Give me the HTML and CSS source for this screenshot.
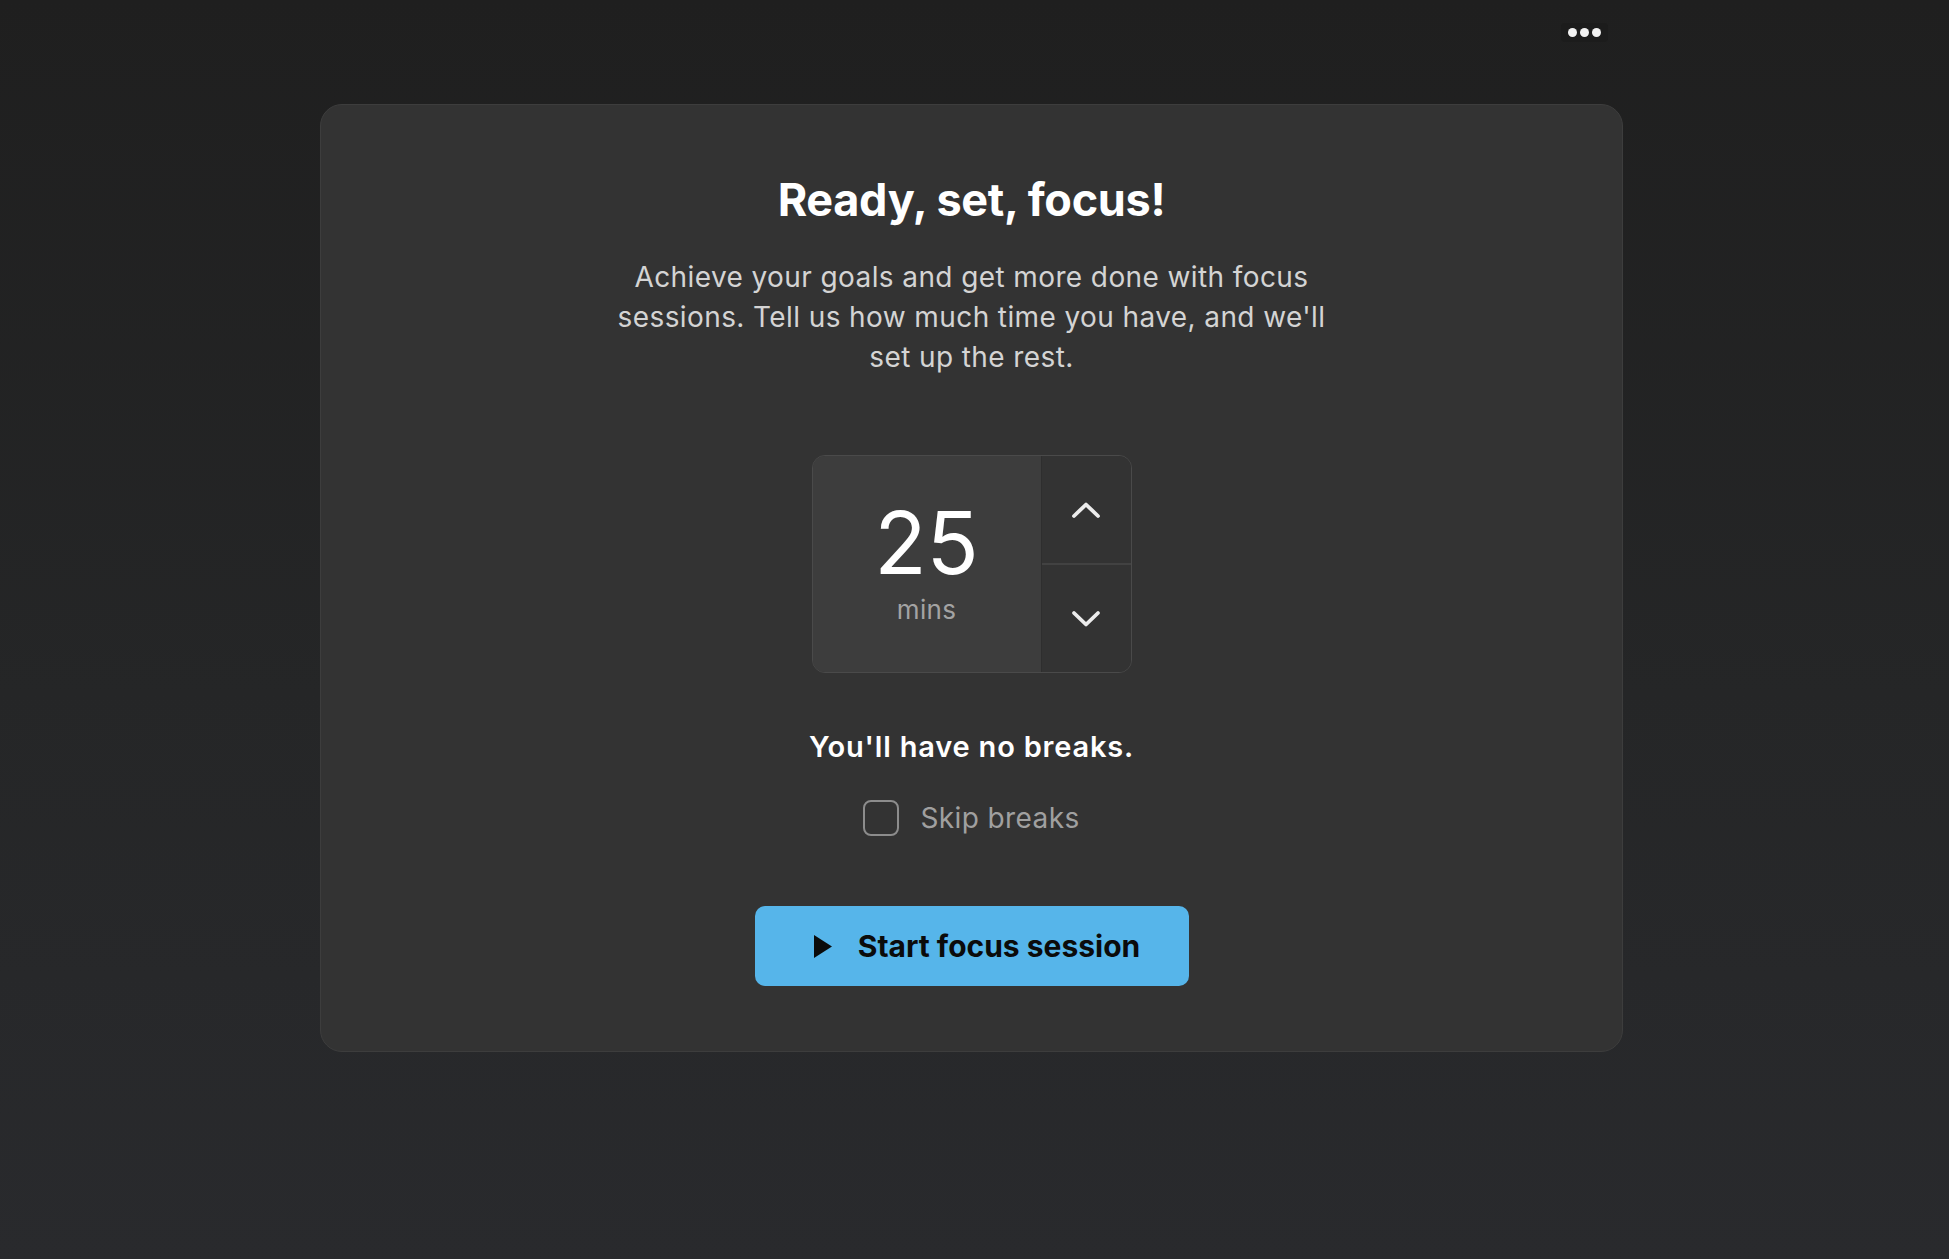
FILE: index.html
```html
<!DOCTYPE html>
<html lang="en">
<head>
<meta charset="utf-8">
<title>Focus</title>
<link rel="stylesheet" href="styles.css">
</head>
<body>
<div class="page">
  <header class="topbar">
    <button class="more" aria-label="More options">
      <span class="dot"></span><span class="dot"></span><span class="dot"></span>
    </button>
  </header>
  <main class="card">
    <h1 class="title">Ready, set, focus!</h1>
    <p class="lead">Achieve your goals and get more done with focus sessions. Tell us how much time you have, and we'll set up the rest.</p>
    <div class="stepper">
      <div class="value">
        <span class="num">25</span>
        <span class="unit">mins</span>
      </div>
      <div class="arrows">
        <button class="arrow" aria-label="Increase">
          <svg width="30" height="18" viewBox="0 0 30 18"><path d="M3 15 L15 3.5 L27 15" fill="none" stroke="#ececec" stroke-width="3.8" stroke-linecap="round" stroke-linejoin="round"/></svg>
        </button>
        <button class="arrow arrow-down" aria-label="Decrease">
          <svg width="30" height="18" viewBox="0 0 30 18"><path d="M3 3 L15 14.5 L27 3" fill="none" stroke="#ececec" stroke-width="3.8" stroke-linecap="round" stroke-linejoin="round"/></svg>
        </button>
      </div>
    </div>
    <p class="breaks">You'll have no breaks.</p>
    <label class="skip">
      <span class="box"></span>
      <span class="skip-text">Skip breaks</span>
    </label>
    <button class="start">
      <svg width="20" height="25" viewBox="0 0 20 25"><path d="M1 1 L19 12.5 L1 24 Z" fill="#0b0b0b"/></svg>
      <span>Start focus session</span>
    </button>
  </main>
</div>
</body>
</html>
```

FILE: styles.css
```css
html, body {
  margin: 0;
  padding: 0;
  height: 100%;
}
body {
  background: linear-gradient(to bottom, #1f1f1f 0%, #252627 55%, #292a2d 100%);
  font-family: Inter, "Noto Sans", "Liberation Sans", sans-serif;
  color: #ffffff;
}
.page {
  width: 1303px;
  margin: 0 auto;
  padding-right: 6px;
}
.topbar {
  height: 64px;
  display: flex;
  justify-content: flex-end;
  align-items: center;
  padding-right: 15px;
}
.more {
  display: flex;
  gap: 3px;
  align-items: center;
  background: #1c1c1c;
  border: none;
  padding: 5px 7px;
  border-radius: 4px;
  cursor: pointer;
}
.dot {
  width: 9px;
  height: 9px;
  border-radius: 50%;
  background: #f2f2f2;
}
.card {
  margin-top: 40px;
  height: 948px;
  box-sizing: border-box;
  background: #333333;
  border: 1px solid #3d3d3d;
  border-radius: 22px;
  display: flex;
  flex-direction: column;
  align-items: center;
  padding-top: 69px;
}
.title {
  margin: 0;
  font-size: 45px;
  line-height: 52px;
  font-weight: 700;
  color: #ffffff;
  letter-spacing: -0.3px;
}
.lead {
  margin: 31px 0 0;
  width: 720px;
  text-align: center;
  font-size: 28px;
  line-height: 40px;
  color: #d4d4d4;
  letter-spacing: 0.4px;
}
.stepper {
  margin-top: 78px;
  width: 320px;
  height: 218px;
  box-sizing: border-box;
  border: 1px solid #4a4a4a;
  border-radius: 13px;
  overflow: hidden;
  display: flex;
}
.value {
  width: 228px;
  background: #3d3d3d;
  display: flex;
  flex-direction: column;
  align-items: center;
  padding-top: 42px;
  box-sizing: border-box;
}
.num {
  font-size: 86px;
  line-height: 90px;
  font-weight: 400;
  color: #ffffff;
}
.unit {
  margin-top: 7px;
  font-size: 26px;
  line-height: 30px;
  color: #a3a3a3;
  letter-spacing: 0.3px;
}
.arrows {
  flex: 1;
  display: flex;
  flex-direction: column;
  border-left: 1px solid #2e2e2e;
  background: #333333;
}
.arrow {
  flex: 1;
  border: none;
  background: transparent;
  display: flex;
  align-items: center;
  justify-content: center;
  padding: 0;
  cursor: pointer;
}
.arrow-down {
  border-top: 2px solid #424242;
}
.breaks {
  margin: 56px 0 0;
  font-size: 29px;
  line-height: 36px;
  font-weight: 600;
  color: #ffffff;
  letter-spacing: 0.8px;
}
.skip {
  margin-top: 35px;
  display: flex;
  align-items: center;
  gap: 21px;
  height: 36px;
}
.box {
  width: 32px;
  height: 32px;
  border: 2px solid #8c8c8c;
  border-radius: 8px;
}
.skip-text {
  font-size: 28px;
  color: #a0a0a0;
  letter-spacing: 0.4px;
}
.start {
  margin-top: 70px;
  width: 434px;
  height: 80px;
  border: none;
  border-radius: 10px;
  background: #56b5ea;
  display: flex;
  align-items: center;
  justify-content: center;
  gap: 25px;
  font-family: inherit;
  font-size: 30px;
  font-weight: 700;
  color: #0b0b0b;
  cursor: pointer;
  padding: 0 0 0 10px;
}
```
